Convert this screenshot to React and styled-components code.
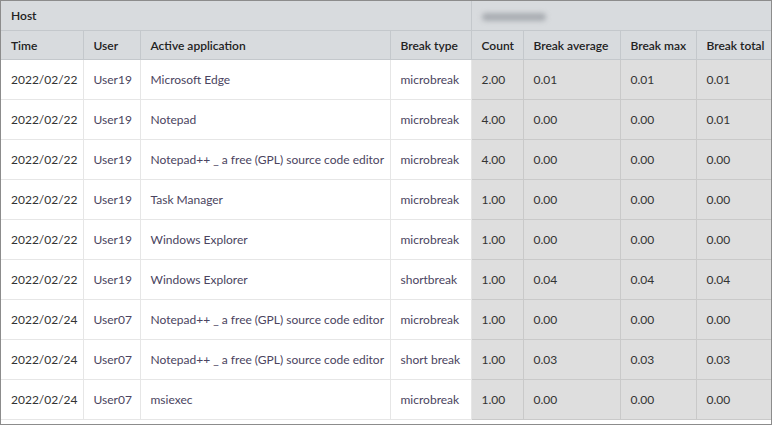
import React from "react";
import styled, { createGlobalStyle } from "styled-components";

const G = createGlobalStyle`
  body { margin: 0; background: #fff; font-family: Lato, "Open Sans", sans-serif; }
`;
const Wrap = styled.div`
  width: 772px; height: 425px; box-sizing: border-box; border: 1px solid #8c8c8c; overflow: hidden;
`;
const Table = styled.table`
  border-collapse: collapse; table-layout: fixed; width: 770px; font-size: 12px;
`;
const Th = styled.th`
  background: #d8dbde; color: #222; font-weight: 600; text-align: left; white-space: nowrap;
  padding: 0 10px; height: ${p => p.$h}px; border: 1px solid #c4c8cc; border-top: none;
  &:first-child { border-left: none; }
  &:last-child { border-right: none; }
`;
const Td = styled.td`
  background: ${p => (p.$gray ? "#dedede" : "#fff")};
  color: ${p => (p.$c ? "#4a4460" : "#333")};
  padding: 0 10px; height: 39px; border: 1px solid ${p => (p.$gray ? "#c9c9c9" : "#e6e6e6")};
  white-space: nowrap;
  &:first-child { border-left: none; }
  &:last-child { border-right: none; }
`;
const Blur = styled.span`
  display: inline-block; width: 64px; height: 8px; border-radius: 4px; background: #a9adb2;
  filter: blur(2.5px); vertical-align: middle;
`;

const rows = [
  ["2022/02/22","User19","Microsoft Edge","microbreak","2.00","0.01","0.01","0.01"],
  ["2022/02/22","User19","Notepad","microbreak","4.00","0.00","0.00","0.01"],
  ["2022/02/22","User19","Notepad++ _ a free (GPL) source code editor","microbreak","4.00","0.00","0.00","0.00"],
  ["2022/02/22","User19","Task Manager","microbreak","1.00","0.00","0.00","0.00"],
  ["2022/02/22","User19","Windows Explorer","microbreak","1.00","0.00","0.00","0.00"],
  ["2022/02/22","User19","Windows Explorer","shortbreak","1.00","0.04","0.04","0.04"],
  ["2022/02/24","User07","Notepad++ _ a free (GPL) source code editor","microbreak","1.00","0.00","0.00","0.00"],
  ["2022/02/24","User07","Notepad++ _ a free (GPL) source code editor","short break","1.00","0.03","0.03","0.03"],
  ["2022/02/24","User07","msiexec","microbreak","1.00","0.00","0.00","0.00"],
];
const widths = [82, 57, 250, 81, 52, 97, 76, 75];
const heads = ["Time","User","Active application","Break type","Count","Break average","Break max","Break total"];

export default function App() {
  return (
    <Wrap>
      <G />
      <Table>
        <colgroup>{widths.map((w, i) => <col key={i} style={{ width: w }} />)}</colgroup>
        <thead>
          <tr>
            <Th $h={29} colSpan={4}>Host</Th>
            <Th $h={29} colSpan={4}><Blur /></Th>
          </tr>
          <tr>{heads.map(h => <Th key={h} $h={28}>{h}</Th>)}</tr>
        </thead>
        <tbody>
          {rows.map((r, i) => (
            <tr key={i}>
              {r.map((c, j) => <Td key={j} $gray={j >= 4} $c={j >= 1 && j <= 3}>{c}</Td>)}
            </tr>
          ))}
        </tbody>
      </Table>
    </Wrap>
  );
}
